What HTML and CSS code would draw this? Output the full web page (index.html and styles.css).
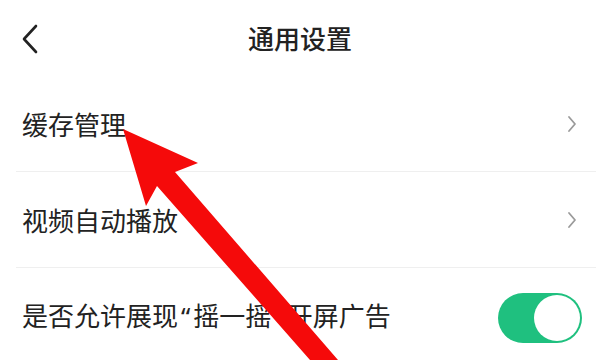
FILE: index.html
```html
<!DOCTYPE html>
<html lang="zh-CN">
<head>
<meta charset="utf-8">
<title>通用设置</title>
<link rel="stylesheet" href="styles.css">
</head>
<body>
<div class="page">
  <header class="header">
    <span class="back">
      <svg width="18" height="30" viewBox="0 0 18 30"><path d="M15 2 L3 15 L15 28" fill="none" stroke="#222" stroke-width="2.6" stroke-linecap="round" stroke-linejoin="round"/></svg>
    </span>
    <h1 class="title">通用设置</h1>
  </header>
  <ul class="list">
    <li class="row">
      <span class="label">缓存管理</span>
      <svg class="chev" width="12" height="18" viewBox="0 0 12 18"><path d="M3 2 L9 9 L3 16" fill="none" stroke="#9a9a9a" stroke-width="1.8" stroke-linecap="round" stroke-linejoin="round"/></svg>
    </li>
    <li class="row">
      <span class="label">视频自动播放</span>
      <svg class="chev" width="12" height="18" viewBox="0 0 12 18"><path d="M3 2 L9 9 L3 16" fill="none" stroke="#9a9a9a" stroke-width="1.8" stroke-linecap="round" stroke-linejoin="round"/></svg>
    </li>
    <li class="row">
      <span class="label">是否允许展现<span class="q">“</span>摇一摇<span class="q">”</span>开屏广告</span>
      <span class="toggle"><span class="knob"></span></span>
    </li>
  </ul>
  <svg class="arrow" width="596" height="360" viewBox="0 0 596 360">
    <polygon points="123,129 198,163 175,172 338,360 310,360 157,186 146,206" fill="#f50a0a"/>
  </svg>
</div>
</body>
</html>
```
FILE: styles.css
```css
* { box-sizing: border-box; }
html, body { margin: 0; padding: 0; background: #fff; }
body {
  font-family: "Noto Sans CJK SC", "Noto Sans", sans-serif;
  color: #222;
}
.page {
  position: relative;
  width: 596px;
  height: 360px;
  overflow: hidden;
}
.header {
  position: relative;
  height: 76px;
  display: flex;
  align-items: center;
  justify-content: center;
}
.back {
  position: absolute;
  left: 21px;
  top: 24px;
  display: flex;
}
.title {
  margin: 0;
  font-size: 26px;
  font-weight: 500;
  line-height: 1;
  margin-left: 4px;
  margin-top: 0;
}
.list {
  list-style: none;
  margin: 0;
  padding: 0;
}
.row {
  height: 96px;
  margin-left: 16px;
  padding: 0 18px 0 6px;
  border-bottom: 1px solid #efefef;
  display: flex;
  align-items: center;
  justify-content: space-between;
}
.label {
  font-size: 26px;
  line-height: 1;
  letter-spacing: 0;
}
.q {
  font-family: "Noto Sans", sans-serif;
  margin: 0 3px;
}
.chev { display: block; }
.toggle {
  width: 84px;
  height: 50px;
  border-radius: 25px;
  background: #1fc07f;
  margin-right: -4px;
  margin-top: 4px;
  display: flex;
  align-items: center;
  justify-content: flex-end;
  padding: 2px;
}
.knob {
  width: 46px;
  height: 46px;
  border-radius: 50%;
  background: #fff;
}
.arrow {
  position: absolute;
  left: 0;
  top: 0;
  pointer-events: none;
}
```
